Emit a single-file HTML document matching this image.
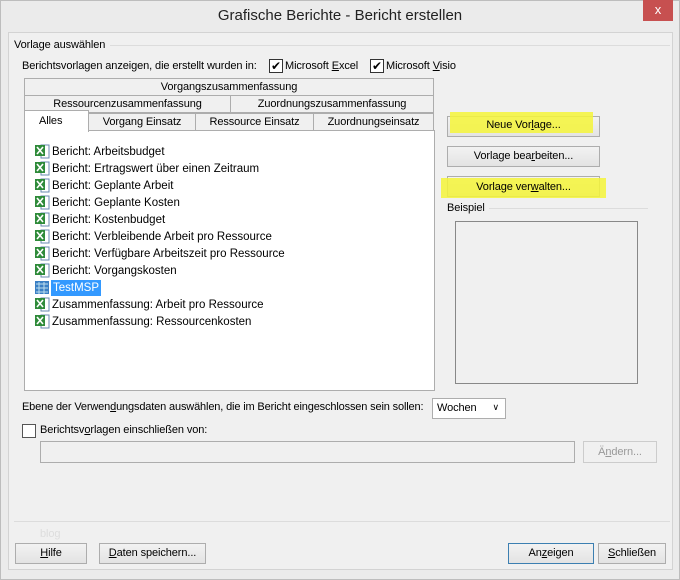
<!DOCTYPE html>
<html><head><meta charset="utf-8"><style>
*{box-sizing:border-box}
body{margin:0;width:680px;height:580px;background:#ebebeb;font-family:"Liberation Sans",sans-serif;font-size:11px;letter-spacing:-0.1px;color:#000;position:relative;overflow:hidden}
.a{position:absolute;white-space:nowrap}
.win{position:absolute;left:0;top:0;width:680px;height:580px;border:1px solid #bdbdbd}
.panel{position:absolute;left:8px;top:32px;width:665px;height:538px;background:#f0f0f0;border:1px solid #d3d3d3}
.cb{position:absolute;width:14px;height:14px;border:1px solid #333;background:#fff}
.tab{position:absolute;background:#f0f0f0;border:1px solid #adadad;text-align:center;line-height:16px;font-size:11px}
.btn{position:absolute;border:1px solid #adadad;background:linear-gradient(#f2f2f2,#e3e3e3);text-align:center;font-size:11px}
.it{position:absolute;left:52px;font-size:11.5px;letter-spacing:0;height:16px;line-height:16px}
.ic{position:absolute;left:34px;width:16px;height:15px}
u{text-decoration:underline}
</style></head><body>
<div class="win"></div>
<div class="a" style="left:0;top:7px;width:680px;text-align:center;font-size:15px;letter-spacing:0;color:#222">Grafische Berichte - Bericht erstellen</div>
<div class="a" style="left:643px;top:0;width:30px;height:21px;background:#c75050;color:#fff;text-align:center;font-size:13px;line-height:20px">x</div>
<div class="panel"></div>
<div class="a" style="left:14px;top:39px">Vorlage auswählen</div>
<div class="a" style="left:110px;top:45px;width:560px;border-top:1px solid #dcdcdc"></div>
<div class="a" style="left:22px;top:60px">Berichtsvorlagen anzeigen, die erstellt wurden in:</div>
<div class="cb" style="left:269px;top:59px;font-size:12px;line-height:12px;text-align:center">✔</div>
<div class="a" style="left:285px;top:60px">Microsoft <u>E</u>xcel</div>
<div class="cb" style="left:370px;top:59px;font-size:12px;line-height:12px;text-align:center">✔</div>
<div class="a" style="left:386px;top:60px">Microsoft <u>V</u>isio</div>

<div class="tab" style="left:24px;top:78px;width:410px;height:18px">Vorgangszusammenfassung</div>
<div class="tab" style="left:24px;top:95px;width:207px;height:18px">Ressourcenzusammenfassung</div>
<div class="tab" style="left:230px;top:95px;width:204px;height:18px">Zuordnungszusammenfassung</div>
<div class="tab" style="left:88px;top:113px;width:108px;height:18px">Vorgang Einsatz</div>
<div class="tab" style="left:195px;top:113px;width:119px;height:18px">Ressource Einsatz</div>
<div class="tab" style="left:313px;top:113px;width:121px;height:18px">Zuordnungseinsatz</div>
<div class="a" style="left:24px;top:130px;width:411px;height:261px;background:#fff;border:1px solid #adadad"></div>
<div class="a" style="left:24px;top:110px;width:65px;height:22px;background:#fff;border:1px solid #adadad;border-bottom:none;line-height:20px;padding-left:14px">Alles</div>

<svg width="0" height="0" style="position:absolute"><defs>
<g id="x"><rect x="7" y="1" width="8" height="13" fill="#fff" stroke="#6a8ab0"/><rect x="1" y="1" width="10" height="11" fill="#2f8b3a"/><path d="M3 3l6 7M9 3l-6 7" stroke="#fff" stroke-width="1.6"/></g>
</defs></svg>
<svg class="ic" style="top:144px"><use href="#x"/></svg><div class="it" style="top:144px">Bericht: Arbeitsbudget</div>
<svg class="ic" style="top:161px"><use href="#x"/></svg><div class="it" style="top:161px">Bericht: Ertragswert über einen Zeitraum</div>
<svg class="ic" style="top:178px"><use href="#x"/></svg><div class="it" style="top:178px">Bericht: Geplante Arbeit</div>
<svg class="ic" style="top:195px"><use href="#x"/></svg><div class="it" style="top:195px">Bericht: Geplante Kosten</div>
<svg class="ic" style="top:212px"><use href="#x"/></svg><div class="it" style="top:212px">Bericht: Kostenbudget</div>
<svg class="ic" style="top:229px"><use href="#x"/></svg><div class="it" style="top:229px">Bericht: Verbleibende Arbeit pro Ressource</div>
<svg class="ic" style="top:246px"><use href="#x"/></svg><div class="it" style="top:246px">Bericht: Verfügbare Arbeitszeit pro Ressource</div>
<svg class="ic" style="top:263px"><use href="#x"/></svg><div class="it" style="top:263px">Bericht: Vorgangskosten</div>
<svg class="ic" style="top:280px"><rect x="1" y="1" width="14" height="13" fill="#3a7fc4"/><path d="M2 4h12M2 8h12M2 12h12M5 2v12M10 2v12" stroke="#bde" stroke-width="1"/></svg>
<div class="it" style="top:280px;left:51px;background:#3399ff;color:#fff;padding:0 2px">TestMSP</div>
<svg class="ic" style="top:297px"><use href="#x"/></svg><div class="it" style="top:297px">Zusammenfassung: Arbeit pro Ressource</div>
<svg class="ic" style="top:314px"><use href="#x"/></svg><div class="it" style="top:314px">Zusammenfassung: Ressourcenkosten</div>

<div class="btn" style="left:447px;top:116px;width:153px;height:21px"></div>
<div class="a" style="left:450px;top:112px;width:143px;height:21px;background:#f4f438;opacity:.85"></div>
<div class="a" style="left:447px;top:119px;width:153px;text-align:center">Neue Vor<u>l</u>age...</div>
<div class="btn" style="left:447px;top:146px;width:153px;height:21px;line-height:19px">Vorlage bea<u>r</u>beiten...</div>
<div class="btn" style="left:447px;top:176px;width:153px;height:21px"></div>
<div class="a" style="left:441px;top:178px;width:165px;height:20px;background:#f4f438;opacity:.85"></div>
<div class="a" style="left:447px;top:181px;width:153px;text-align:center">Vorlage ver<u>w</u>alten...</div>
<div class="a" style="left:447px;top:202px">Beispiel</div>
<div class="a" style="left:489px;top:208px;width:159px;border-top:1px solid #dcdcdc"></div>
<div class="a" style="left:455px;top:221px;width:183px;height:163px;border:1px solid #888"></div>

<div class="a" style="left:22px;top:401px;letter-spacing:-0.15px">Ebene der Verwen<u>d</u>ungsdaten auswählen, die im Bericht eingeschlossen sein sollen:</div>
<div class="a" style="left:432px;top:398px;width:74px;height:21px;background:#fff;border:1px solid #adadad;padding:3px 4px">Wochen<span style="position:absolute;right:6px;top:3px;font-size:9px">&#8744;</span></div>
<div class="cb" style="left:22px;top:424px;border-color:#555"></div>
<div class="a" style="left:40px;top:424px">Berichtsv<u>o</u>rlagen einschließen von:</div>
<div class="a" style="left:40px;top:441px;width:535px;height:22px;background:#f0f0f0;border:1px solid #adadad"></div>
<div class="btn" style="left:583px;top:441px;width:74px;height:22px;line-height:20px;color:#999;border-color:#ccc;background:#f0f0f0">Ä<u>n</u>dern...</div>

<div class="a" style="left:14px;top:521px;width:656px;border-top:1px solid #dcdcdc"></div>
<div class="a" style="left:40px;top:528px;color:#ddd">blog</div>
<div class="btn" style="left:15px;top:543px;width:72px;height:21px;line-height:19px"><u>H</u>ilfe</div>
<div class="btn" style="left:99px;top:543px;width:107px;height:21px;line-height:19px"><u>D</u>aten speichern...</div>
<div class="btn" style="left:508px;top:543px;width:86px;height:21px;line-height:19px;border-color:#3c7fb1">An<u>z</u>eigen</div>
<div class="btn" style="left:598px;top:543px;width:68px;height:21px;line-height:19px"><u>S</u>chließen</div>
</body></html>
